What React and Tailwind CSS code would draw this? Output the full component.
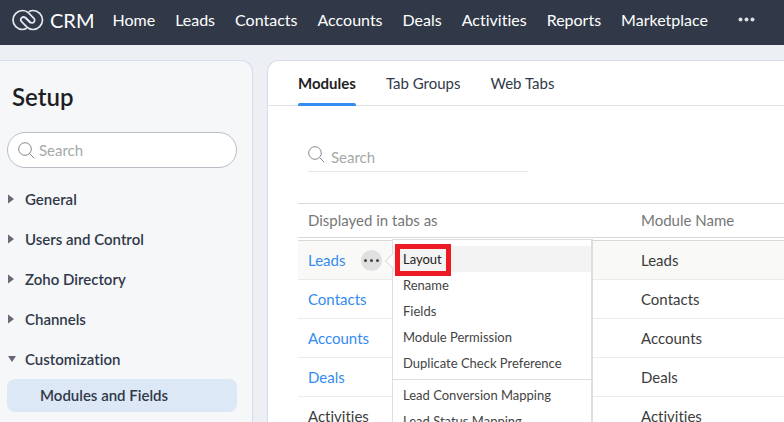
import React from 'react'

const navItems = ['Home', 'Leads', 'Contacts', 'Accounts', 'Deals', 'Activities', 'Reports', 'Marketplace']
const setupGroups = ['General', 'Users and Control', 'Zoho Directory', 'Channels']
const tabs = ['Modules', 'Tab Groups', 'Web Tabs']
const modules = ['Leads', 'Contacts', 'Accounts', 'Deals', 'Activities']
const layoutActions = ['Layout', 'Rename', 'Fields', 'Module Permission', 'Duplicate Check Preference']
const leadActions = ['Lead Conversion Mapping', 'Lead Status Mapping']

const Logo = () => (
  <svg width="32" height="22" viewBox="0 0 32 22" fill="none" stroke="#e6e8ec" strokeWidth="1.7" strokeLinecap="round" strokeLinejoin="round" aria-hidden="true">
    <path d="M14.200 19.600C12.900 20.300 11.900 20.500 10.500 20.500A9.500 9.500 0 0 1 10.500 1.500c2.500 0 4.500.9 6.300 2.700l5.100 5.200a2.600 2.600 0 0 1-3.700 3.700l-4.700-4.600" />
    <path d="M17.300 2.400C18.600 1.700 19.600 1.500 21 1.500A9.500 9.500 0 0 1 21 20.500c-2.500 0-4.500-.9-6.300-2.700l-5.100-5.200a2.600 2.600 0 0 1 3.700-3.700l4.700 4.600" />
  </svg>
)

const SearchIcon = () => (
  <svg width="17" height="17" viewBox="0 0 17 17" fill="none" stroke="#85858d" strokeWidth="1" className="shrink-0" aria-hidden="true">
    <circle cx="7" cy="7" r="6.300" />
    <path d="m11.600 11.600 4.600 4.600" />
  </svg>
)

const Arrow = ({ open }) => (
  <svg width="8" height="10" viewBox="0 0 8 10" fill="#6b6577" aria-hidden="true">
    <path d={open ? 'M0 2h8L4 8Z' : 'M0 0.500 6 5 0 9.500Z'} />
  </svg>
)

const Header = () => (
  <header className="flex h-[45px] shrink-0 items-center bg-[#313949] pb-1.5 pl-3 text-white">
    <a href="#home" className="flex items-center gap-1.5 text-xl leading-6">
      <Logo />
      CRM
    </a>
    <nav className="ml-[18px] flex items-center gap-5 text-base leading-5 whitespace-nowrap">
      {navItems.map((item) => (
        <a key={item} href="#nav">{item}</a>
      ))}
      <button type="button" aria-label="More" className="ml-2.5 flex h-5 items-center">
        <svg width="17" height="5" viewBox="0 0 17 5" fill="#dddfe3">
          <circle cx="2.500" cy="2.500" r="2" />
          <circle cx="8.500" cy="2.500" r="2" />
          <circle cx="14.500" cy="2.500" r="2" />
        </svg>
      </button>
    </nav>
  </header>
)

const Sidebar = () => (
  <aside className="w-[253px] shrink-0 rounded-tr-xl border-t border-r border-[#d5dcea] bg-[#f5f7f9] pt-5 pr-[15px] pl-[7px] text-[#313949]">
    <h1 className="pl-[5px] text-2xl font-semibold text-[#1e1e24]">Setup</h1>
    <label className="mt-[19px] mb-[11px] flex h-9 items-center gap-1 rounded-full border border-[#babec4] bg-white pl-2.5 text-[#85858d]">
      <SearchIcon />
      <input type="text" aria-label="Search setup" placeholder="Search" className="w-full min-w-0 bg-transparent text-[15px] outline-none placeholder:text-[#a4aaa6]" />
    </label>
    <ul className="text-[15px] font-semibold">
      {setupGroups.map((group) => (
        <li key={group}>
          <button type="button" className="flex h-10 w-full items-center gap-[9px] pl-px">
            <Arrow />
            {group}
          </button>
        </li>
      ))}
      <li>
        <button type="button" aria-expanded="true" className="flex h-10 w-full items-center gap-[9px] pl-px">
          <Arrow open />
          Customization
        </button>
        <a href="#modules" className="flex h-[33px] items-center rounded-lg bg-[#dce8f6] pl-[33px]">Modules and Fields</a>
      </li>
    </ul>
  </aside>
)

const MenuItem = ({ label }) => (
  <button type="button" role="menuitem" className={`block h-[26px] w-full pl-2.5 text-left whitespace-nowrap ${label === 'Layout' ? 'bg-[#f3f3f3] text-[#222]' : ''}`}>
    {label}
  </button>
)

const ModuleMenu = () => (
  <div role="menu" className="absolute top-9 left-[94px] z-10 w-[201px] border border-r-2 border-[#dedede] bg-white pt-1.5 text-[13px] leading-[26px] text-[#444]">
    {/* pointer towards the row's more button */}
    <span className="absolute top-4 -left-[6px] size-2.5 rotate-45 border-b border-l border-[#dedede] bg-white" />
    <div className="relative">
      {layoutActions.map((label) => <MenuItem key={label} label={label} />)}
      <span className="pointer-events-none absolute -top-0.5 left-0.5 h-8 w-14 border-5 border-[#ed1c24]" />
    </div>
    <div className="mt-[3px] border-t border-[#dedede] pt-0.5">
      {leadActions.map((label) => <MenuItem key={label} label={label} />)}
    </div>
  </div>
)

const ModuleTable = () => (
  <div className="relative mt-[31px] ml-[30px]">
    <table className="w-full border-separate border-spacing-0 text-left text-[15px] text-[#3c3c3c]">
      <thead>
        <tr className="text-[#777]">
          <th className="h-[38px] w-[333px] border-t border-b-4 border-double border-[#d9d9d9] pl-2.5 font-normal">Displayed in tabs as</th>
          <th className="border-t border-b-4 border-double border-[#d9d9d9] pl-2.5 font-normal">Module Name</th>
        </tr>
      </thead>
      <tbody>
        {modules.map((name) => (
          <tr key={name} className={name === 'Leads' ? 'bg-[#f9f9f8]' : ''}>
            <td className="h-[39px] border-b border-[#ebebeb] pl-2.5">
              <div className="flex items-center gap-4">
                {name === 'Activities' ? name : <a href="#module" className="text-[#338cf0]">{name}</a>}
                {name === 'Leads' && (
                  <button type="button" aria-label="Leads actions" className="flex size-[21px] items-center justify-center rounded-full bg-[#e0e0e0]">
                    <svg width="15" height="3" viewBox="0 0 15 3" fill="#444">
                      <circle cx="1.500" cy="1.500" r="1.500" />
                      <circle cx="7.500" cy="1.500" r="1.500" />
                      <circle cx="13.500" cy="1.500" r="1.500" />
                    </svg>
                  </button>
                )}
              </div>
            </td>
            <td className="border-b border-[#ebebeb] pl-2.5">{name}</td>
          </tr>
        ))}
      </tbody>
    </table>
    <ModuleMenu />
  </div>
)

const App = () => {
  return (
    <div className="flex h-screen flex-col overflow-hidden bg-[#eceff4] font-['Lato',sans-serif] [font-variant-ligatures:none]">
      <Header />
      <div className="flex min-h-0 flex-1 gap-3.5 pt-[15px]">
        <Sidebar />
        <main className="min-w-0 flex-1 overflow-hidden rounded-tl-xl border-t border-l border-[#d5dcea] bg-white">
          <div role="tablist" className="flex h-[45px] gap-[30px] border-b border-[#dfe3e8] pl-[30px] text-[15px] text-[#313949]">
            {tabs.map((tab) => (
              <button key={tab} type="button" role="tab" className={`h-[45px] ${tab === 'Modules' ? 'relative font-bold text-[#1e1e24] after:absolute after:inset-x-0 after:bottom-0 after:h-[3px] after:rounded-t-xs after:bg-[#338cf0]' : ''}`}>
                {tab}
              </button>
            ))}
          </div>
          <label className="mt-9 ml-10 flex h-[30px] w-[220px] gap-1.5 border-b border-[#e6e6e6] pt-1">
            <SearchIcon />
            <input type="text" aria-label="Search modules" placeholder="Search" className="h-[22px] w-full min-w-0 text-[15px] outline-none placeholder:text-[#a4aaa6]" />
          </label>
          <ModuleTable />
        </main>
      </div>
    </div>
  )
}

export default App
